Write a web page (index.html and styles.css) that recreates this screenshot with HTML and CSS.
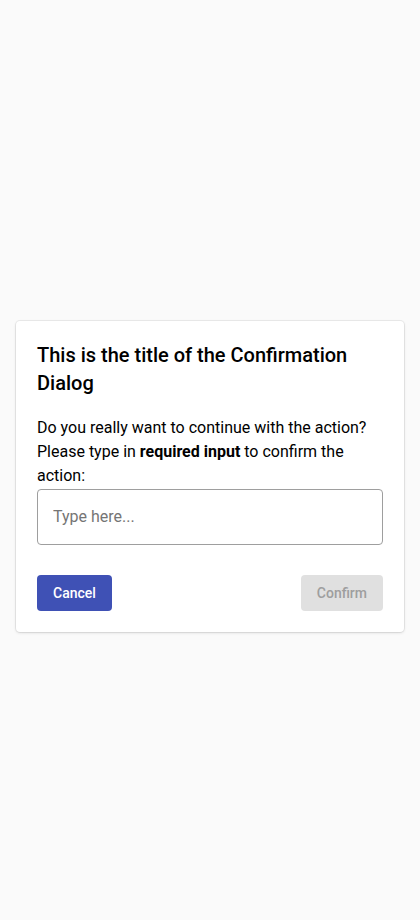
FILE: index.html
```html
<!DOCTYPE html>
<html lang="en">
<head>
<meta charset="utf-8">
<title>Confirmation Dialog</title>
<link rel="stylesheet" href="styles.css">
</head>
<body>
<div class="page">
  <div class="dialog">
    <h2 class="title">This is the title of the Confirmation Dialog</h2>
    <p class="text">Do you really want to continue with the action? Please type in <strong>required input</strong> to confirm the action:</p>
    <input class="field" type="text" placeholder="Type here...">
    <div class="actions">
      <button class="btn btn-primary">Cancel</button>
      <button class="btn btn-disabled" disabled>Confirm</button>
    </div>
  </div>
</div>
</body>
</html>
```
FILE: styles.css
```css
html, body {
  margin: 0;
  padding: 0;
  background: #fafafa;
  font-family: Roboto, "Liberation Sans", sans-serif;
  color: #000;
}
.page {
  min-height: 920px;
  box-sizing: border-box;
  padding: 32px 16px 0;
  display: flex;
  flex-direction: column;
  justify-content: center;
}
.dialog {
  background: #fff;
  border-radius: 4px;
  box-shadow: 0 0 0 1px rgba(0,0,0,0.06), 0 1px 3px rgba(0,0,0,0.12);
  padding: 20px 21px 21px;
}
.title {
  margin: 0 0 19px;
  font-size: 20px;
  line-height: 28px;
  font-weight: 500;
}
.text {
  margin: 0;
  font-size: 16px;
  line-height: 24px;
}
.text strong {
  font-weight: 700;
}
.field {
  display: block;
  box-sizing: border-box;
  width: 100%;
  height: 56px;
  margin: 1px 0 0;
  padding: 0 15px;
  border: 1px solid #9e9e9e;
  border-radius: 4px;
  font-family: inherit;
  font-size: 16px;
  color: #000;
  background: #fff;
  outline: none;
}
.field::placeholder {
  color: #757575;
}
.actions {
  display: flex;
  justify-content: space-between;
  margin-top: 30px;
}
.btn {
  height: 36px;
  padding: 0 16px;
  border: none;
  border-radius: 4px;
  font-family: inherit;
  font-size: 14px;
  font-weight: 500;
}
.btn-primary {
  background: #3f51b5;
  color: #fff;
}
.btn-disabled {
  background: #e0e0e0;
  color: #9e9e9e;
}
```
